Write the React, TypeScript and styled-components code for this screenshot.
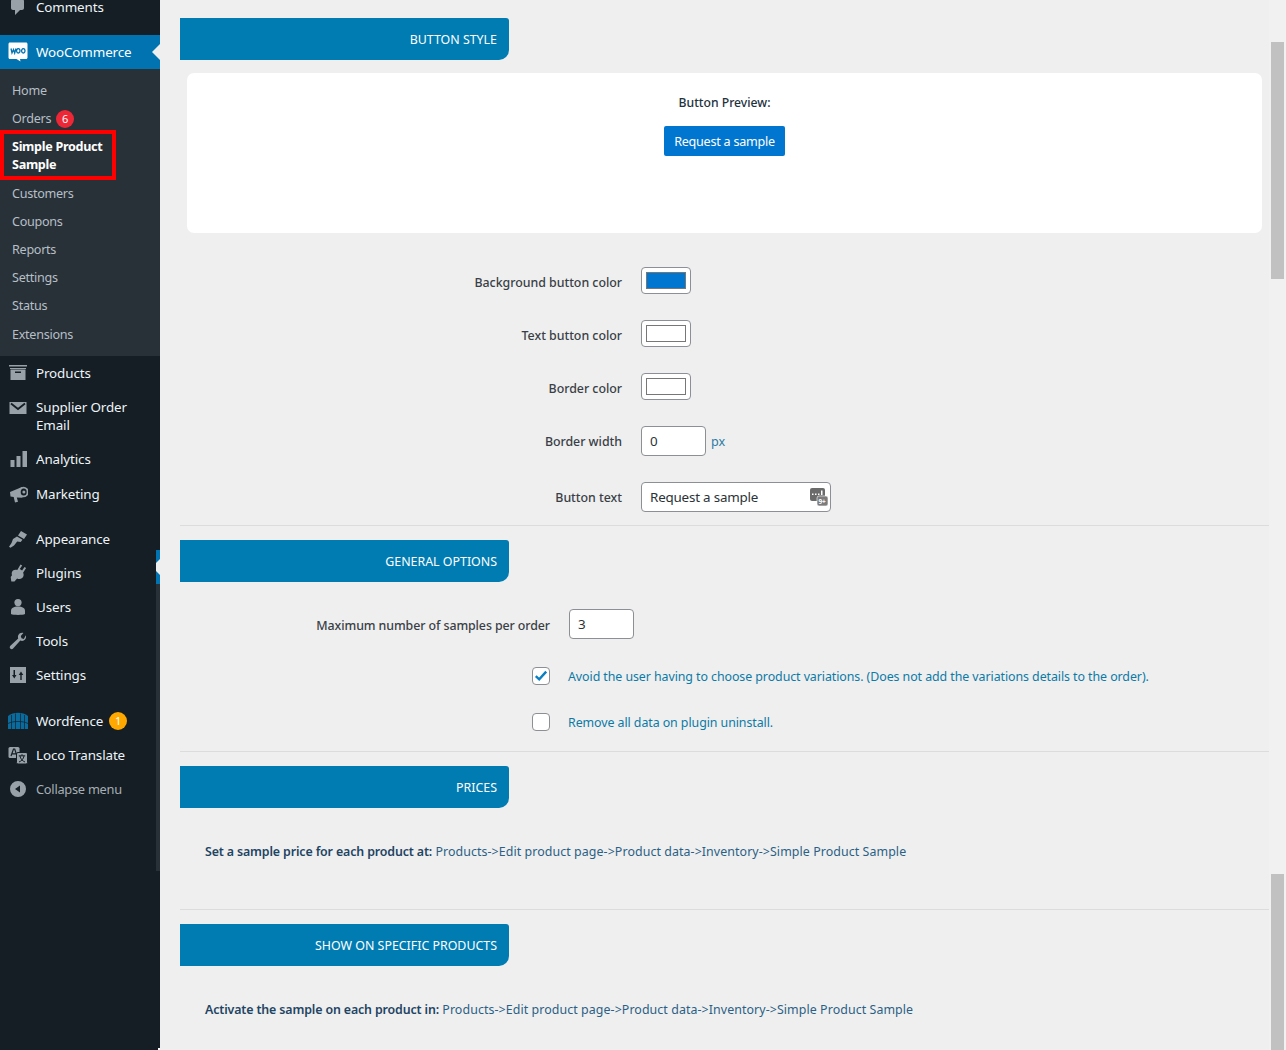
import React from "react";
import styled, { createGlobalStyle } from "styled-components";

const Global = createGlobalStyle`
  html, body { margin: 0; padding: 0; height: 1050px; overflow: hidden; background: #efefef; }
  * { box-sizing: border-box; }
  body { font-family: "Noto Sans", "Open Sans", sans-serif; font-size: 13px; }
`;

const Page = styled.div`
  display: flex;
  height: 1050px;
  overflow: hidden;
  position: relative;
  background: #efefef;
`;

const Sidebar = styled.nav`
  width: 160px;
  flex: none;
  height: 1050px;
  background: #141e24;
  position: relative;
`;

const Row = styled.div<{ $h?: number; $mt?: number }>`
  display: flex;
  align-items: center;
  height: ${(p) => p.$h ?? 34}px;
  margin-top: ${(p) => p.$mt ?? 0}px;
  position: relative;
  font-size: 13.4px;
  letter-spacing: -0.12px;
  line-height: 18px;
  color: #eef3f7;
`;

const ActiveRow = styled(Row)`
  background: #0073b0;
  color: #fff;
`;

const IconSlot = styled.span<{ $top?: boolean }>`
  width: 36px;
  flex: none;
  display: flex;
  justify-content: center;
  padding-right: 1px;
  align-items: center;
  color: #98a1a8;
  align-self: ${(p) => (p.$top ? "flex-start" : "center")};
  margin-top: ${(p) => (p.$top ? 11 : 0)}px;
`;

const RowText = styled.span<{ $muted?: boolean }>`
  color: ${(p) => (p.$muted ? "#a7aeb4" : "inherit")};
  font-size: ${(p) => (p.$muted ? 12.8 : 13.4)}px;
  letter-spacing: ${(p) => (p.$muted ? -0.25 : -0.12)}px;
  white-space: pre-line;
`;

const Notch = styled.span`
  position: absolute;
  right: 0;
  top: 50%;
  margin-top: -8px;
  border: 8px solid transparent;
  border-right-color: #efefef;
  border-left-width: 0;
`;

const Submenu = styled.div`
  background: #283138;
  padding-top: 7px;
  height: 287px;
`;

const SubItem = styled.div<{ $mt?: number }>`
  height: 28px;
  margin-top: ${(p) => p.$mt ?? 0}px;
  display: flex;
  align-items: center;
  padding: 2px 0 0 12px;
  font-size: 12.6px;
  letter-spacing: -0.28px;
  line-height: 18px;
  color: #b6bfc6;
`;

const HighlightBox = styled.div`
  width: 116px;
  height: 50px;
  margin: -2px 0 -1px;
  border: 4px solid #f00;
  padding: 2px 0 0 8px;
  display: flex;
  align-items: center;
  font-weight: 700;
  font-size: 12.6px;
  letter-spacing: -0.3px;
  line-height: 18px;
  color: #fff;
`;

const Count = styled.span<{ $bg: string; $fg: string; $ml?: number }>`
  display: inline-flex;
  width: 18px;
  height: 18px;
  border-radius: 50%;
  background: ${(p) => p.$bg};
  color: ${(p) => p.$fg};
  font-size: 11px;
  letter-spacing: 0;
  align-items: center;
  justify-content: center;
  margin-left: ${(p) => p.$ml ?? 5}px;
`;

const Strip = styled.div`
  position: absolute;
  left: 156px;
  top: 550px;
  width: 4px;
  height: 321px;
  background: #283138;
`;

const StripActive = styled.div`
  height: 34px;
  background: #0073b0;
  position: relative;
  overflow: hidden;
`;

const StripArrow = styled.span`
  position: absolute;
  right: 0;
  top: 9px;
  border: 8px solid transparent;
  border-right-color: #efefef;
  border-left-width: 0;
`;

const CornerNick = styled.span`
  position: absolute;
  left: 158px;
  top: 1048px;
  width: 2px;
  height: 2px;
  background: #fff;
`;

const Content = styled.main`
  flex: 1;
  min-width: 0;
  padding: 18px 17px 0 20px;
`;

const Section = styled.section<{ $h: number }>`
  height: ${(p) => p.$h}px;
  border-bottom: 1px solid #dcdcdc;
  margin-bottom: 14px;
`;

const Band = styled.h2`
  margin: 0;
  width: 329px;
  height: 42px;
  background: #007cb2;
  border-radius: 0 3px 10px 0;
  color: #fff;
  font-size: 12.4px;
  font-weight: 400;
  line-height: 44px;
  text-align: right;
  padding-right: 12px;
  text-transform: uppercase;
  overflow: hidden;
`;

const PreviewCard = styled.div`
  margin: 13px 7px 0;
  height: 160px;
  background: #fff;
  border-radius: 7px;
  display: flex;
  flex-direction: column;
  align-items: center;
  padding-top: 21px;
`;

const PreviewLabel = styled.div`
  font-size: 12.2px;
  font-weight: 500;
  line-height: 18px;
  color: #23323d;
`;

const PreviewButton = styled.div`
  margin-top: 14px;
  width: 121px;
  height: 30px;
  background: #0076d1;
  border-radius: 2px;
  color: #fff;
  font-size: 12.6px;
  letter-spacing: -0.25px;
  line-height: 32px;
  text-align: center;
`;

const FormRow = styled.div<{ $label: number; $top: number }>`
  display: grid;
  grid-template-columns: ${(p) => p.$label}px auto;
  column-gap: 19px;
  align-items: center;
  justify-content: start;
  margin-top: ${(p) => p.$top}px;
`;

const Label = styled.label<{ $pt?: number }>`
  text-align: right;
  font-size: 12.4px;
  font-weight: 500;
  letter-spacing: -0.03px;
  line-height: 18px;
  color: #3a3f47;
  white-space: nowrap;
  padding-top: ${(p) => p.$pt ?? 3}px;
`;

const WideLabel = styled(Label)`
  letter-spacing: -0.09px;
`;

const Swatch = styled.div<{ $c: string }>`
  width: 50px;
  height: 27px;
  background: #fff;
  border: 1px solid #8c8f94;
  border-radius: 4px;
  padding: 4px;
  &::after {
    content: "";
    display: block;
    height: 15px;
    background: ${(p) => p.$c};
    border: 1px solid #777;
  }
`;

const InputBox = styled.div<{ $w: number }>`
  width: ${(p) => p.$w}px;
  height: 30px;
  background: #fff;
  border: 1px solid #8c8f94;
  border-radius: 4px;
  padding-left: 8px;
  font-size: 13.4px;
  letter-spacing: -0.2px;
  line-height: 28px;
  color: #2c3338;
  position: relative;
`;

const InlineControls = styled.div`
  display: flex;
  align-items: center;
  gap: 5px;
`;

const Unit = styled.span`
  font-size: 12.6px;
  color: #2c7ba3;
`;

const KeyIcon = styled.svg`
  position: absolute;
  right: 1px;
  top: 4px;
`;

const CheckRow = styled.div<{ $top: number }>`
  display: flex;
  align-items: center;
  margin: ${(p) => p.$top}px 0 0 352px;
  height: 18px;
  gap: 18px;
`;

const Check = styled.span`
  width: 18px;
  height: 18px;
  flex: none;
  background: #fff;
  border: 1px solid #8c8f94;
  border-radius: 4px;
  display: flex;
  align-items: center;
  justify-content: center;
`;

const CheckText = styled.span`
  font-size: 12.4px;
  letter-spacing: -0.07px;
  line-height: 20px;
  color: #0c7aa6;
  white-space: nowrap;
  padding-top: 1px;
`;

const Info = styled.p`
  margin: 35px 0 0 25px;
  font-size: 12.4px;
  letter-spacing: 0.08px;
  line-height: 18px;
  color: #2b5f85;
  white-space: nowrap;
  strong { font-weight: 600; color: #1e4463; letter-spacing: -0.13px; }
`;

const ScrollTrack = styled.div`
  position: absolute;
  right: 0;
  top: 0;
  bottom: 0;
  width: 17px;
  background: #f1f1f1;
`;

const ScrollThumb = styled.div<{ $top: number; $h: number }>`
  position: absolute;
  left: 2px;
  width: 13px;
  top: ${(p) => p.$top}px;
  height: ${(p) => p.$h}px;
  background: #c1c1c1;
`;

const I = ({ children }: { children: React.ReactNode }) => (
  <svg width="20" height="20" viewBox="0 0 20 20" fill="currentColor">{children}</svg>
);

const icons: Record<string, React.ReactNode> = {
  comments: <I><path d="M5 2h9c1.100 0 2 .9 2 2v7c0 1.100-.9 2-2 2h-2l-5 5v-5H5c-1.100 0-2-.9-2-2V4c0-1.100.9-2 2-2z" /></I>,
  woo: (
    <svg width="20" height="20" viewBox="0 0 20 20">
      <path d="M2 .5h16c.9 0 1.500.6 1.500 1.500v13.500c0 .9-.6 1.500-1.500 1.500h-6l.5 2.500-4-2.500H2c-.9 0-1.500-.6-1.500-1.500V2C.5 1.100 1.100.5 2 .5z" fill="#fff" />
      <path d="M3 6.500l1 4.500 1.500-3.500 1.200 3.500 1.300-4.500M10.300 6.600a1.700 2.200 0 1 0 .01 0M15.300 6.600a1.700 2.200 0 1 0 .01 0" fill="none" stroke="#0073b0" strokeWidth="1.300" />
    </svg>
  ),
  products: <I><path d="M1 2h18v1.500H1zM2 5h16v1H2z" /><path d="M2.500 6.500h15V17h-15zM7 8.500v1.500h6V8.500z" fillRule="evenodd" /></I>,
  mail: (
    <svg width="20" height="14" viewBox="0 0 20 14">
      <rect x="1.500" y="1" width="17" height="12" fill="currentColor" />
      <path d="M3 2.500l7 5.500 7-5.500" fill="none" stroke="#141e24" strokeWidth="1.800" />
    </svg>
  ),
  analytics: <I><path d="M2.500 11h4v7h-4zM8.500 7h4v11h-4zM14.500 2H19v16h-4.500z" /></I>,
  marketing: (
    <I>
      <path d="M14 3L2 8l.5 4.500L5.700 13l1.300 5.500 3-.8-1.200-4.200 5.700.2z" />
      <circle cx="15.500" cy="8" r="5.200" />
      <ellipse cx="15.700" cy="8" rx="3" ry="3.600" fill="#141e24" />
      <circle cx="15.900" cy="8" r="1.500" />
    </I>
  ),
  appearance: <I><path d="M13 2l6 3.500-3 4.500-6-3.500zM9 7.500l5.500 3.200-1.800 2.300-3.500-.5L6 16.500l-3.500 2.300-1.500-1 2.500-3.800L5 10z" /></I>,
  plugins: <I><path d="M12.500 1.500l1.700 1-2.400 3.600 2.300 1.500 2.400-3.600 1.600 1.100-3 4.600c1 1.700.6 4-1 5.300-1.500 1.200-3.400 1.100-5 .4l-2.600 3.100H3.300l-.6-4.600 1.300-1.600c-.6-1.700-.3-3.600 1-4.800 1.300-1 2.900-1.100 4.300-.5z" /></I>,
  users: <I><circle cx="10" cy="5.600" r="3.600" /><path d="M3 14c0-3 2.500-4.500 7-4.500s7 1.500 7 4.500v3c-2 1.200-12 1.200-14 0z" /></I>,
  tools: <I><path d="M17.800 4.300c.8 2-.1 4.400-2 5.300-1.200.6-2.500.5-3.500 0l-7.200 8c-.8.800-2 .8-2.800 0-.8-.8-.7-2 .1-2.800l7.800-7.300c-.4-1.100-.4-2.400.2-3.500 1-1.800 3-2.700 5-2L12.800 5l.7 2.300 2.300.6z" /></I>,
  settings: <I><path d="M2 2h16v16H2zM5.500 5v5H4l2.300 3.500L8.500 10H7V5zM13 6.500L10.700 10h1.600v5h1.400v-5h1.600z" fillRule="evenodd" /></I>,
  wordfence: (
    <svg width="20" height="20" viewBox="0 0 20 20">
      <path d="M0 5C3 3 6 1.800 10 1.800S17 3 20 5v13H0z" fill="#0a6c9e" />
      <path d="M3.500 4v14M7.500 2.500V18M12.500 2.500V18M16.500 4v14M0 12.500c3-1.500 6-2 10-2s7 .5 10 2" fill="none" stroke="#141e24" strokeWidth="0.7" />
    </svg>
  ),
  loco: (
    <I>
      <rect x="0.500" y="2" width="11" height="11" rx="1.500" />
      <path d="M3 11l2.500-7h1.200L9 11M4 8.800h4" fill="none" stroke="#141e24" strokeWidth="1.200" />
      <rect x="8.500" y="7.500" width="11" height="11.500" rx="1.500" stroke="#141e24" strokeWidth="1" />
      <path d="M14 9.200v1.400M10.800 10.800h6.400M12 11c.4 2.800 2.500 5 5 6M16 11c-.4 2.800-2.500 5-5 6" fill="none" stroke="#141e24" strokeWidth="1" />
    </I>
  ),
  collapse: <I><path d="M10 2a8 8 0 1 1 0 16 8 8 0 0 1 0-16zm2 4.500L7 10l5 3.500z" fillRule="evenodd" /></I>,
};

const MenuRow = ({ icon, text, h, mt, muted, top, children }: { icon: string; text: string; h?: number; mt?: number; muted?: boolean; top?: boolean; children?: React.ReactNode }) => (
  <Row $h={h} $mt={mt}>
    <IconSlot $top={top}>{icons[icon]}</IconSlot>
    <RowText $muted={muted}>{text}</RowText>
    {children}
  </Row>
);

const subItems = ["Customers", "Coupons", "Reports", "Settings", "Status"];

const CheckMark = () => (
  <svg width="16" height="16" viewBox="0 0 16 16">
    <path d="M2.800 8.200l3.400 3.200 7-7.800" fill="none" stroke="#0a7fc4" strokeWidth="2.400" />
  </svg>
);

const KeyGlyph = () => (
  <KeyIcon width="20" height="20" viewBox="0 0 20 20">
    <rect x="1" y="1" width="15" height="13" rx="2" fill="#6b6b6b" />
    <rect x="8" y="9" width="11" height="10" rx="2" fill="#7c7c7c" stroke="#fff" strokeWidth="0.6" />
    <path d="M3 6.500h1.500v1.500H3zM6 6.500h1.500v1.500H6zM9 6.500h1.500v1.500H9zM12 3.500h1.500v4.500H12z" fill="#fff" />
    <text x="9.500" y="17" fontSize="6.500" fontWeight="700" fill="#fff" fontFamily="Noto Sans, sans-serif">9+</text>
  </KeyIcon>
);

export default function App() {
  return (
    <Page>
      <Global />
      <Sidebar>
        <MenuRow icon="comments" text="Comments" mt={-10} />
        <ActiveRow $mt={11}>
          <IconSlot>{icons.woo}</IconSlot>
          <RowText>WooCommerce</RowText>
          <Notch />
        </ActiveRow>
        <Submenu>
          <SubItem>Home</SubItem>
          <SubItem>
            Orders<Count $bg="#ee2737" $fg="#fff">6</Count>
          </SubItem>
          <HighlightBox>
            <span>Simple Product<br />Sample</span>
          </HighlightBox>
          {subItems.map((s) => (
            <SubItem key={s}>{s}</SubItem>
          ))}
          <SubItem $mt={1}>Extensions</SubItem>
        </Submenu>
        <MenuRow icon="products" text="Products" />
        <MenuRow icon="mail" text={"Supplier Order\nEmail"} h={52} top />
        <MenuRow icon="analytics" text="Analytics" />
        <MenuRow icon="marketing" text="Marketing" h={35} />
        <MenuRow icon="appearance" text="Appearance" mt={11} />
        <MenuRow icon="plugins" text="Plugins" />
        <MenuRow icon="users" text="Users" />
        <MenuRow icon="tools" text="Tools" />
        <MenuRow icon="settings" text="Settings" />
        <MenuRow icon="wordfence" text="Wordfence" mt={12}>
          <Count $bg="#ffa800" $fg="#fff" $ml={6}>1</Count>
        </MenuRow>
        <MenuRow icon="loco" text="Loco Translate" />
        <MenuRow icon="collapse" text="Collapse menu" muted />
        <Strip>
          <StripActive>
            <StripArrow />
          </StripActive>
        </Strip>
        <CornerNick />
      </Sidebar>
      <Content>
        <Section $h={508}>
          <Band>Button style</Band>
          <PreviewCard>
            <PreviewLabel>Button Preview:</PreviewLabel>
            <PreviewButton>Request a sample</PreviewButton>
          </PreviewCard>
          <FormRow $label={442} $top={34}>
            <Label $pt={5}>Background button color</Label>
            <Swatch $c="#0076d1" />
          </FormRow>
          <FormRow $label={442} $top={26}>
            <Label $pt={5}>Text button color</Label>
            <Swatch $c="#ffffff" />
          </FormRow>
          <FormRow $label={442} $top={26}>
            <Label $pt={5}>Border color</Label>
            <Swatch $c="#ffffff" />
          </FormRow>
          <FormRow $label={442} $top={26}>
            <Label $pt={1}>Border width</Label>
            <InlineControls>
              <InputBox $w={65}>0</InputBox>
              <Unit>px</Unit>
            </InlineControls>
          </FormRow>
          <FormRow $label={442} $top={26}>
            <Label $pt={1}>Button text</Label>
            <InputBox $w={190}>
              Request a sample
              <KeyGlyph />
            </InputBox>
          </FormRow>
        </Section>
        <Section $h={212}>
          <Band>General options</Band>
          <FormRow $label={370} $top={27}>
            <WideLabel>Maximum number of samples per order</WideLabel>
            <InputBox $w={65}>3</InputBox>
          </FormRow>
          <CheckRow $top={28}>
            <Check><CheckMark /></Check>
            <CheckText>Avoid the user having to choose product variations. (Does not add the variations details to the order).</CheckText>
          </CheckRow>
          <CheckRow $top={28}>
            <Check />
            <CheckText>Remove all data on plugin uninstall.</CheckText>
          </CheckRow>
        </Section>
        <Section $h={144}>
          <Band>Prices</Band>
          <Info>
            <strong>Set a sample price for each product at:</strong> Products-&gt;Edit product page-&gt;Product data-&gt;Inventory-&gt;Simple Product Sample
          </Info>
        </Section>
        <Section $h={144}>
          <Band>Show on specific products</Band>
          <Info>
            <strong>Activate the sample on each product in:</strong> Products-&gt;Edit product page-&gt;Product data-&gt;Inventory-&gt;Simple Product Sample
          </Info>
        </Section>
      </Content>
      <ScrollTrack>
        <ScrollThumb $top={42} $h={237} />
        <ScrollThumb $top={874} $h={176} />
      </ScrollTrack>
    </Page>
  );
}
